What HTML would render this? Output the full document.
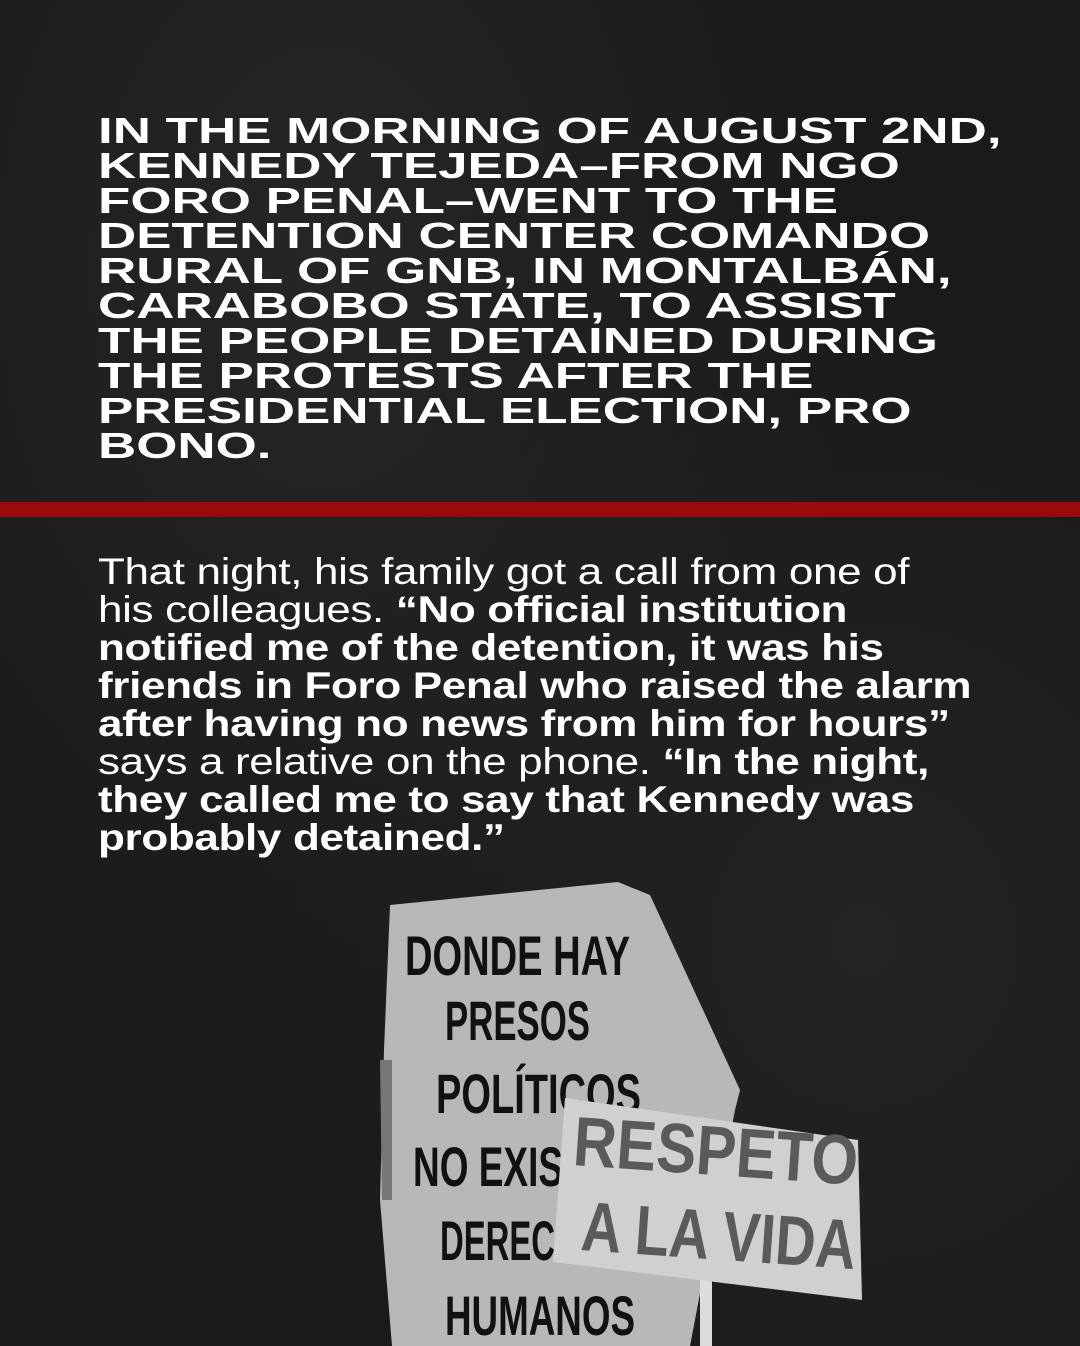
<!DOCTYPE html>
<html><head><meta charset="utf-8"><style>
html,body{margin:0;padding:0}
body{width:1080px;height:1346px;position:relative;overflow:hidden;background:#1a1a1a;
background-image:radial-gradient(ellipse at 30% 20%,#262626 0,transparent 50%),radial-gradient(ellipse at 80% 70%,#232323 0,transparent 50%);}
.h{position:absolute;left:98px;color:#fff;font-family:"Liberation Sans",sans-serif;font-weight:bold;font-size:36px;line-height:36px;white-space:nowrap;transform:scaleX(1.47);transform-origin:0 0;}
.bar{position:absolute;left:0;top:502px;width:1080px;height:15px;background:#9a0a0a}
.b{position:absolute;left:98px;color:#fff;font-family:"Liberation Sans",sans-serif;font-size:37px;line-height:38px;white-space:nowrap;letter-spacing:-0.3px;transform:scaleX(1.19);transform-origin:0 0}
.b b{font-weight:bold}
</style></head><body>
<div class="h" style="top:113px">IN THE MORNING OF AUGUST 2ND,</div>
<div class="h" style="top:148px">KENNEDY TEJEDA–FROM NGO</div>
<div class="h" style="top:183px">FORO PENAL–WENT TO THE</div>
<div class="h" style="top:218px">DETENTION CENTER COMANDO</div>
<div class="h" style="top:253px">RURAL OF GNB, IN MONTALBÁN,</div>
<div class="h" style="top:288px">CARABOBO STATE, TO ASSIST</div>
<div class="h" style="top:323px">THE PEOPLE DETAINED DURING</div>
<div class="h" style="top:358px">THE PROTESTS AFTER THE</div>
<div class="h" style="top:393px">PRESIDENTIAL ELECTION, PRO</div>
<div class="h" style="top:428px">BONO.</div>
<div class="bar"></div>
<div class="b" style="top:553px">That night, his family got a call from one of</div>
<div class="b" style="top:591px">his colleagues. <b>“No official institution</b></div>
<div class="b" style="top:629px"><b>notified me of the detention, it was his</b></div>
<div class="b" style="top:667px"><b>friends in Foro Penal who raised the alarm</b></div>
<div class="b" style="top:705px"><b>after having no news from him for hours”</b></div>
<div class="b" style="top:743px">says a relative on the phone. <b>“In the night,</b></div>
<div class="b" style="top:781px"><b>they called me to say that Kennedy was</b></div>
<div class="b" style="top:819px"><b>probably detained.”</b></div>
<svg style="position:absolute;left:0;top:0" width="1080" height="1346">
<polygon points="390,905 618,882 650,895 740,1090 735,1110 690,1346 392,1346 380,1200 384,1050" fill="#b8b8b8"/>
<polygon points="380,1060 392,1060 392,1200 382,1200" fill="#777"/>
<g font-family="Liberation Sans Narrow,Liberation Sans,sans-serif" font-size="56" font-weight="bold" fill="#111">
<text x="405" y="975" textLength="225" lengthAdjust="spacingAndGlyphs">DONDE HAY</text>
<text x="445" y="1040" textLength="145" lengthAdjust="spacingAndGlyphs">PRESOS</text>
<text x="436" y="1113" textLength="205" lengthAdjust="spacingAndGlyphs">POLÍTICOS</text>
<text x="413" y="1186" textLength="150" lengthAdjust="spacingAndGlyphs">NO EXIS</text>
<text x="440" y="1260" textLength="115" lengthAdjust="spacingAndGlyphs">DEREC</text>
<text x="445" y="1335" textLength="190" lengthAdjust="spacingAndGlyphs">HUMANOS</text>
</g>
<rect x="700" y="1280" width="12" height="66" fill="#ddd"/>
<polygon points="565,1098 858,1140 862,1300 553,1262" fill="#d0d0d0"/>
<g font-family="Liberation Sans,sans-serif" font-weight="bold" fill="#5a5a5a" font-size="70">
<text x="572" y="1165" textLength="285" lengthAdjust="spacingAndGlyphs" transform="rotate(4 572 1165)">RESPETO</text>
<text x="580" y="1250" textLength="275" lengthAdjust="spacingAndGlyphs" transform="rotate(4 580 1250)">A LA VIDA</text>
</g>
</svg>
</body></html>
